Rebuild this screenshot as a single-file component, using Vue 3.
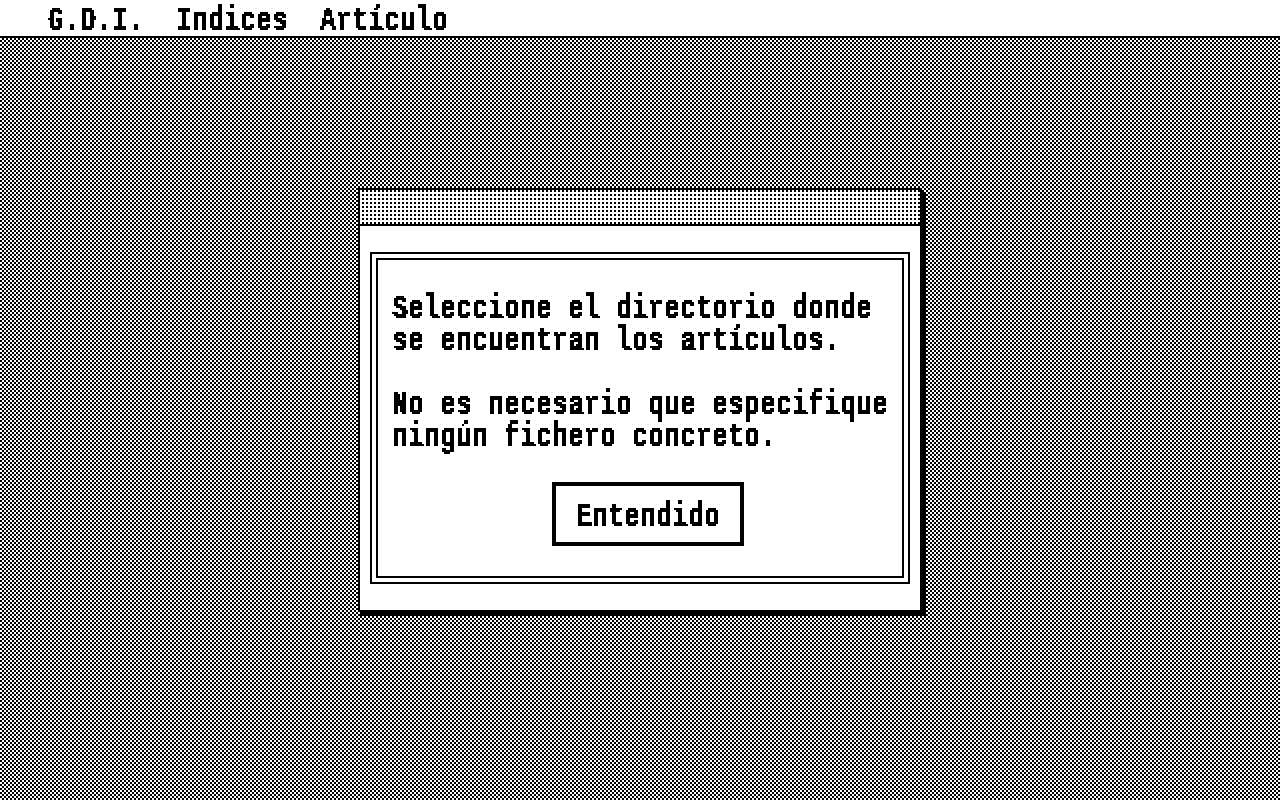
<script setup>
const menus = ['G.D.I.', 'Indices', 'Artículo']

const message = [
  'Seleccione el directorio donde',
  'se encuentran los artículos.',
  '',
  'No es necesario que especifique',
  'ningún fichero concreto.',
]
</script>

<template>
  <div class="desktop">
    <svg class="defs" width="0" height="0" aria-hidden="true">
      <!-- snaps text to a grid of 2px blocks -->
      <filter
        id="bitmap"
        filterUnits="userSpaceOnUse"
        x="0"
        y="0"
        width="640"
        height="200"
        color-interpolation-filters="sRGB"
      >
        <feFlood x="0" y="0" width="1" height="1" flood-color="#000" />
        <feOffset x="0" y="0" width="2" height="2" dx="0" dy="0" />
        <feTile result="grid" />
        <feGaussianBlur in="SourceGraphic" stdDeviation="0.4" />
        <feComposite in2="grid" operator="in" />
        <feComponentTransfer result="dots">
          <feFuncA type="discrete" tableValues="0 1" />
        </feComponentTransfer>
        <feOffset in="dots" dx="1" dy="0" result="right" />
        <feMerge result="row">
          <feMergeNode in="dots" />
          <feMergeNode in="right" />
        </feMerge>
        <feOffset in="row" dx="0" dy="1" result="down" />
        <feMerge>
          <feMergeNode in="row" />
          <feMergeNode in="down" />
        </feMerge>
      </filter>
    </svg>
    <nav class="menubar">
      <div class="menus bitmap">
        <span v-for="menu in menus" :key="menu" class="line">{{ menu }}</span>
      </div>
    </nav>
    <main class="workspace">
      <section class="window">
        <header class="titlebar"></header>
        <div class="body">
          <div class="frame">
            <div class="panel">
              <div class="message bitmap">
                <div v-for="(text, i) in message" :key="i" class="line">{{ text }}</div>
              </div>
              <button class="ok">
                <span class="label bitmap"><span class="line">Entendido</span></span>
              </button>
            </div>
          </div>
        </div>
      </section>
    </main>
  </div>
</template>

<style>
body {
  margin: 0;
  overflow: hidden;
}
</style>

<style scoped>
.desktop {
  display: flex;
  flex-direction: column;
  width: 1280px;
  height: 800px;
  overflow: hidden;
  color: #000;
  background: repeating-conic-gradient(#fff 0 25%, #000 0 50%) 0 0 / 4px 4px;
  font-family: 'Liberation Mono', monospace;
  font-size: 26.66px;
  font-weight: bold;
}

.defs {
  position: absolute;
}

.bitmap {
  filter: url(#bitmap);
}

.line {
  display: block;
  height: 32px;
  line-height: 32px;
  white-space: pre;
  transform: translate(-0.4px, 7px) scaleY(1.34);
  transform-origin: 0 23px;
  -webkit-text-stroke: 0.3px #000;
}

.menubar {
  height: 36px;
  background: #fff;
  border-bottom: 2px solid #000;
}

.menus {
  display: flex;
  gap: 32px;
  height: 36px;
  padding-left: 48px;
}

.workspace {
  flex: 1;
  padding: 150px 0 0 358px;
}

.window {
  width: 562px;
  height: 422px;
  border: solid #000;
  border-width: 2px 0 0 2px;
  background: #fff;
  box-sizing: border-box;
  box-shadow: 2px 2px 0 #000, 4px 2px 0 #000, 2px 6px 0 #000, 6px 4px 0 #000, 6px 6px 0 #000;
}

.titlebar {
  height: 34px;
  border-bottom: 2px solid #000;
  background: conic-gradient(#fff 0 25%, #000 0 50%, #fff 0) 0 -2px / 4px 4px;
}

.body {
  padding: 26px 10px;
}

.frame {
  height: 332px;
  padding: 4px;
  border: 2px solid #000;
  box-sizing: border-box;
}

.panel {
  display: flex;
  flex-direction: column;
  height: 320px;
  padding: 28px 14px 0;
  border: 2px solid #000;
  box-sizing: border-box;
}

.message {
  width: 498px;
  height: 168px;
}

.ok {
  width: 192px;
  height: 64px;
  margin: 26px 0 0 160px;
  padding: 10px 20px;
  border: 4px solid #000;
  border-radius: 0;
  background: #fff;
  color: #000;
  font: inherit;
  text-align: left;
}

.label {
  display: block;
  height: 36px;
}
</style>
